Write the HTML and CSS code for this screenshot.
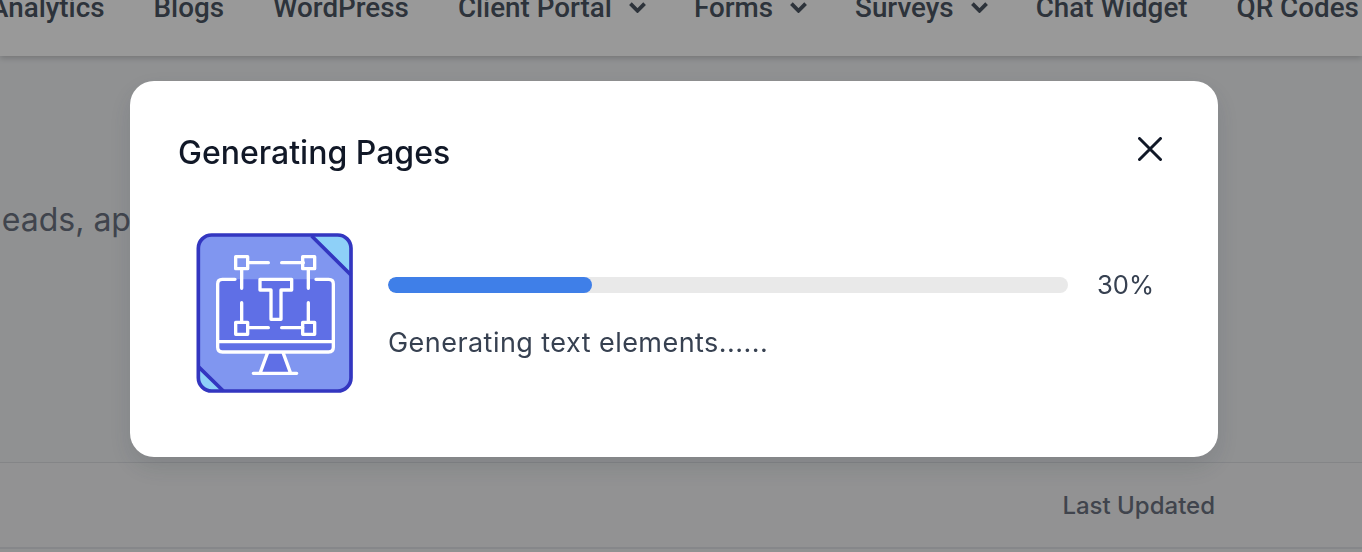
FILE: index.html
```html
<!DOCTYPE html>
<html lang="en">
<head>
    <meta charset="UTF-8">
    <meta name="viewport" content="width=device-width, initial-scale=1.0">
    <title>Generating Pages</title>
    <link rel="stylesheet" href="styles.css">
</head>
<body>
    <div class="nav">
        <div class="nav-row">
            <span class="nav-item">Analytics</span>
            <span class="nav-item">Blogs</span>
            <span class="nav-item">WordPress</span>
            <span class="nav-item">Client Portal
                <svg class="chevron" viewBox="0 0 18 12"><path d="M1.500 2.500 9 10l7.500-7.500"/></svg>
            </span>
            <span class="nav-item">Forms
                <svg class="chevron" viewBox="0 0 18 12"><path d="M1.500 2.500 9 10l7.500-7.500"/></svg>
            </span>
            <span class="nav-item">Surveys
                <svg class="chevron" viewBox="0 0 18 12"><path d="M1.500 2.500 9 10l7.500-7.500"/></svg>
            </span>
            <span class="nav-item">Chat Widget</span>
            <span class="nav-item">QR Codes</span>
        </div>
    </div>

    <div class="content">
        <p class="intro">leads, approvals and more</p>
        <div class="table-head">
            <span class="table-col">Last Updated</span>
        </div>
    </div>

    <div class="overlay">
        <div class="modal">
            <div class="modal-header">
                <h2 class="modal-title">Generating Pages</h2>
                <svg class="close-icon" viewBox="0 0 24 24"><path d="M1.500 1.500l21 21M22.500 1.500l-21 21"/></svg>
            </div>
            <div class="modal-body">
                <svg class="page-icon" viewBox="48 36 474 483">
                    <rect class="icon-bg" x="55" y="45" width="458" height="468" rx="40"/>
                    <path class="icon-corner" d="M395 48h78q40 0 40 40v77z"/>
                    <path class="icon-corner" d="M55 440l75 73H95q-40 0-40-40z"/>
                    <path class="icon-edge" d="M395 48l118 117M55 440l75 73"/>
                    <rect class="icon-frame" x="55" y="45" width="458" height="468" rx="40"/>
                    <rect class="icon-screen" x="115" y="178" width="345" height="222" rx="10"/>
                    <path class="icon-screen" d="M262 400h48l22 60h-92z"/>
                    <path class="icon-line" d="M165 178h-38q-14 0-14 14v190q0 14 14 14h319q14 0 14-14V192q0-14-14-14h-38M113 365h347M262 400l-22 60M310 400l22 60M220 460h130"/>
                    <path class="icon-line" d="M205 128h60M305 128h65M185 148v57M385 148v57M185 248v57M385 248v57M205 323h60M305 323h63"/>
                    <rect class="icon-line" x="167" y="110" width="36" height="36"/>
                    <rect class="icon-line" x="368" y="110" width="36" height="36"/>
                    <rect class="icon-line" x="167" y="307" width="36" height="36"/>
                    <rect class="icon-line" x="368" y="307" width="36" height="36"/>
                    <path class="icon-line" d="M240 178h95v32h-32v88h-30v-88h-33z"/>
                </svg>
                <div class="progress-wrap">
                    <div class="progress-row">
                        <div class="progress-track">
                            <div class="progress-fill" style="width: 30%"></div>
                        </div>
                        <span class="progress-value">30%</span>
                    </div>
                    <p class="progress-text">Generating text elements......</p>
                </div>
            </div>
        </div>
    </div>
</body>
</html>
```

FILE: styles.css
```css
html,
body {
    margin: 0;
    height: 552px;
    overflow: hidden;
}

body {
    font-family: Inter, "Liberation Sans", sans-serif;
    background-color: #f0f2f4;
    color: #374151;
}

.nav {
    height: 56px;
    background-color: #fff;
    box-shadow: 0 2px 6px rgba(0, 0, 0, 0.2);
    overflow: hidden;
    position: relative;
}

.nav-row {
    display: flex;
    gap: 49px;
    margin: -8px 0 0 -10px;
    white-space: nowrap;
    color: #4b5563;
    font-family: Roboto, sans-serif;
    font-size: 27.800px;
    font-weight: 500;
    line-height: 32px;
}

.nav-item {
    display: flex;
    align-items: center;
    gap: 17px;
}

.chevron {
    width: 17px;
    height: 12px;
    margin: -2px -1px 0 0;
    fill: none;
    stroke: #4b5563;
    stroke-width: 4;
}

.content {
    height: 496px;
}

.intro {
    margin: 0 0 0 -6px;
    padding-top: 146px;
    height: 260px;
    box-sizing: border-box;
    font-size: 32px;
    line-height: 36px;
    white-space: nowrap;
    color: #6b7280;
}

.table-head {
    display: flex;
    justify-content: flex-end;
    align-items: center;
    height: 84px;
    margin-top: 146px;
    padding-right: 147px;
    background-color: #f3f4f5;
    border-top: 1px solid #dcdee2;
    border-bottom: 2px solid #e0e2e6;
}

.table-col {
    font-size: 24px;
    font-weight: 500;
    color: #6b7280;
}

.overlay {
    position: fixed;
    inset: 0;
    display: flex;
    justify-content: center;
    align-items: flex-start;
    padding: 81px 14px 0 0;
    background-color: rgba(0, 0, 0, 0.4);
}

.modal {
    width: 1088px;
    height: 376px;
    box-sizing: border-box;
    padding: 52px 56px 0 48px;
    background-color: #fff;
    border-radius: 24px;
    box-shadow: 0 10px 25px rgba(40, 50, 60, 0.15);
}

.modal-header {
    display: flex;
    justify-content: space-between;
    align-items: flex-start;
}

.modal-title {
    margin: 0;
    font-size: 32px;
    font-weight: 500;
    line-height: 40px;
    color: #111827;
}

.close-icon {
    width: 24px;
    height: 24px;
    margin-top: 4px;
    fill: none;
    stroke: #111827;
    stroke-width: 3;
    stroke-linecap: round;
}

.modal-body {
    display: flex;
    align-items: center;
    gap: 34px;
    margin-top: 59px;
    padding-left: 18px;
}

.page-icon {
    width: 158px;
    height: 161px;
    flex: none;
    filter: blur(0.6px);
}

.icon-bg {
    fill: #8096f0;
}

.icon-frame {
    fill: none;
    stroke: #3336c0;
    stroke-width: 11;
}

.icon-corner {
    fill: #8ed0f8;
}

.icon-edge {
    fill: none;
    stroke: #3336c0;
    stroke-width: 11;
}

.icon-screen {
    fill: #5f6fe6;
}

.icon-line {
    fill: none;
    stroke: #fff;
    stroke-width: 10;
    stroke-linecap: round;
    stroke-linejoin: round;
}

.progress-wrap {
    flex: 1;
    padding-top: 4px;
}

.progress-row {
    display: flex;
    align-items: center;
    gap: 29px;
}

.progress-track {
    width: 680px;
    height: 16px;
    background-color: #e9e9e9;
    border-radius: 8px;
    overflow: hidden;
}

.progress-fill {
    height: 100%;
    background-color: #3f7fe8;
    border-radius: 8px;
}

.progress-value {
    font-size: 25.600px;
    line-height: 32px;
}

.progress-text {
    margin: 24px 0 0;
    font-size: 27px;
    line-height: 36px;
    letter-spacing: 0.45px;
    white-space: nowrap;
}
```
